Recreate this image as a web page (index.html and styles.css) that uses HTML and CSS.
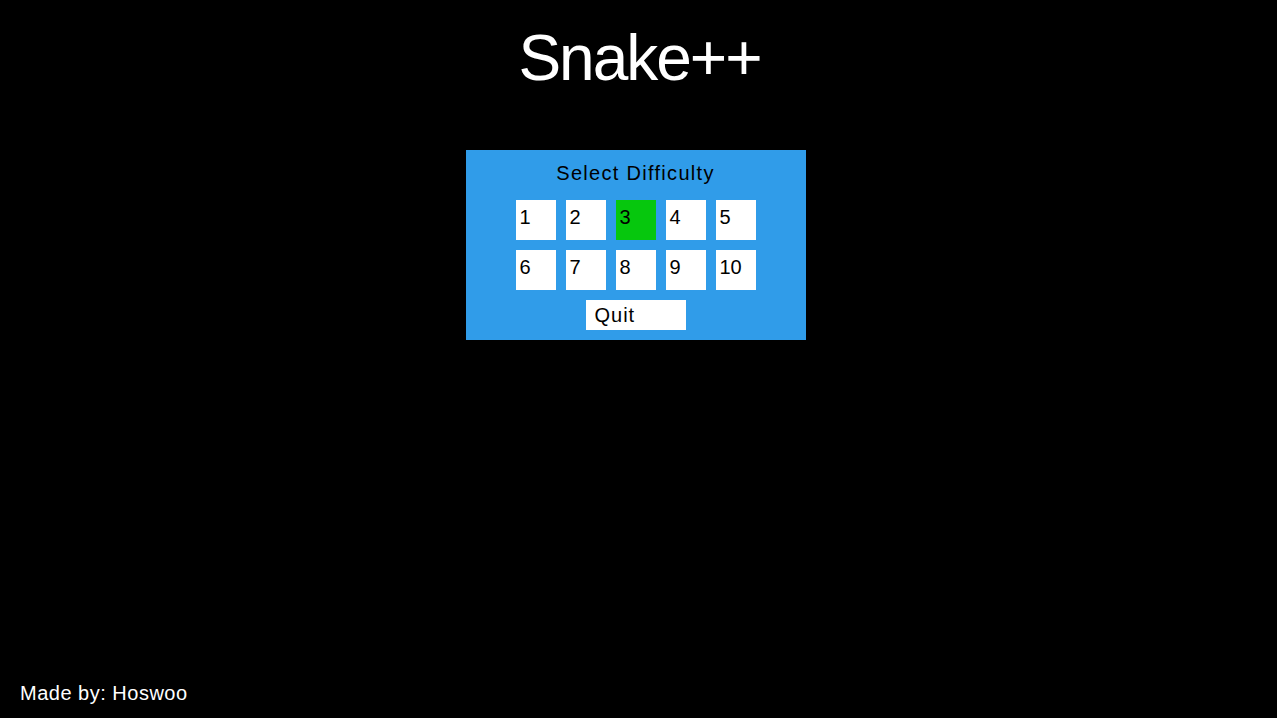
FILE: index.html
```html
<!DOCTYPE html>
<html lang="en">
<head>
<meta charset="utf-8">
<title>Snake++</title>
<link rel="stylesheet" href="styles.css">
</head>
<body>
<div class="page">
  <h1 class="title">Snake++</h1>
  <div class="panel">
    <div class="panel-heading">Select Difficulty</div>
    <div class="levels">
      <button class="level">1</button>
      <button class="level">2</button>
      <button class="level level-active">3</button>
      <button class="level">4</button>
      <button class="level">5</button>
      <button class="level">6</button>
      <button class="level">7</button>
      <button class="level">8</button>
      <button class="level">9</button>
      <button class="level">10</button>
    </div>
    <button class="quit">Quit</button>
  </div>
  <div class="footer">Made by: Hoswoo</div>
</div>
</body>
</html>
```
FILE: styles.css
```css
html, body {
  margin: 0;
  padding: 0;
  background: #000;
}
body {
  font-family: "Liberation Sans", Arial, sans-serif;
  color: #fff;
}
.page {
  height: 718px;
  display: flex;
  flex-direction: column;
  align-items: center;
}
.title {
  margin: 26px 0 0 0;
  font-size: 64px;
  line-height: 64px;
  font-weight: normal;
  letter-spacing: -2px;
  color: #fff;
  padding-left: 2px;
}
.panel {
  margin-top: 60px;
  margin-right: 6px;
  width: 340px;
  box-sizing: border-box;
  background: #309ce9;
  padding: 13px 0 10px 0;
  display: flex;
  flex-direction: column;
  align-items: center;
}
.panel-heading {
  color: #000;
  font-size: 20px;
  line-height: 20px;
  letter-spacing: 1.3px;
}
.levels {
  margin-top: 17px;
  display: grid;
  grid-template-columns: repeat(5, 40px);
  grid-auto-rows: 40px;
  gap: 10px;
}
.level, .quit {
  border: 0;
  margin: 0;
  font-family: "Liberation Sans", Arial, sans-serif;
  font-size: 20px;
  line-height: 20px;
  color: #000;
  background: #fff;
  text-align: left;
  cursor: pointer;
}
.level {
  width: 40px;
  height: 40px;
  padding: 7px 0 0 4px;
  display: flex;
  align-items: flex-start;
  box-sizing: border-box;
}
.level-active {
  background: #06c70d;
}
.quit {
  margin-top: 10px;
  width: 100px;
  height: 30px;
  box-sizing: border-box;
  padding: 5px 0 0 9px;
  display: flex;
  align-items: flex-start;
  letter-spacing: 1px;
}
.footer {
  margin-top: auto;
  align-self: flex-start;
  padding: 0 0 15px 20px;
  font-size: 20px;
  line-height: 20px;
  letter-spacing: 0.5px;
  color: #fff;
}
```
